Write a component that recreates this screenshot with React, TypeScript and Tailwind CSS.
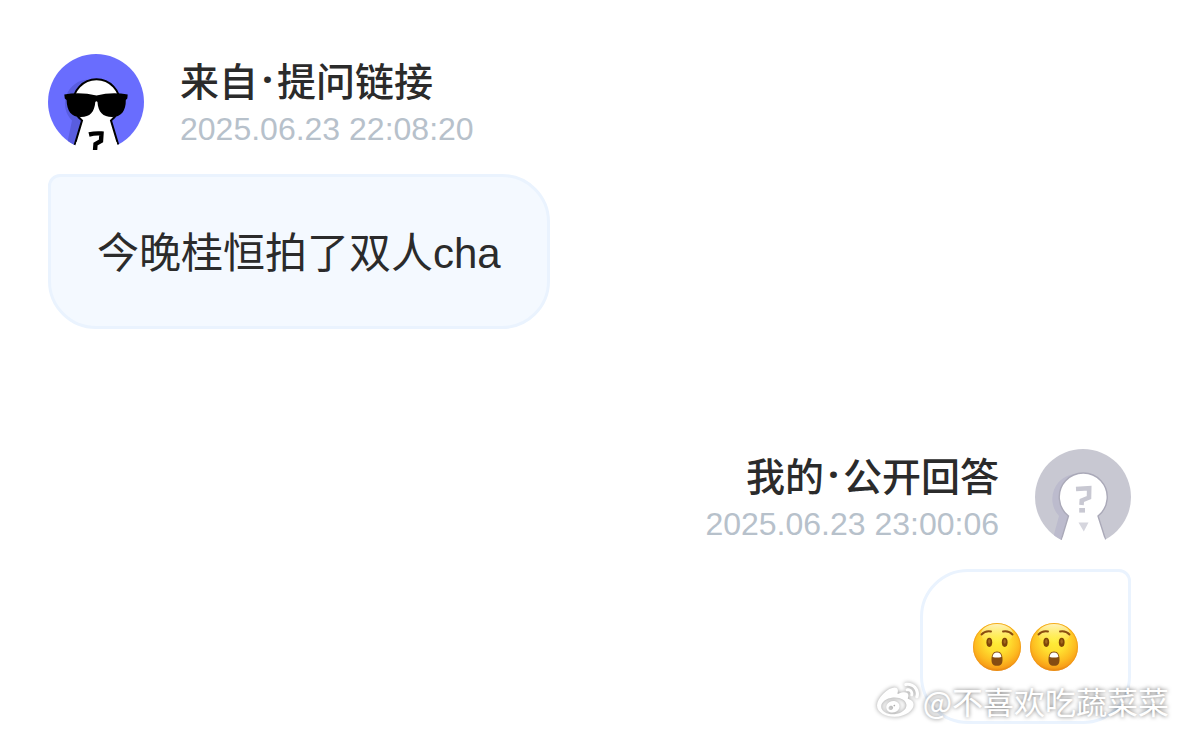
import type { ReactNode } from "react";
import { FaWeibo } from "react-icons/fa";

function AskerAvatar() {
  return (
    <svg viewBox="0 0 96 96" className="size-24 shrink-0" role="img" aria-label="提问者">
      <defs>
        <clipPath id="asker-clip">
          <circle cx="48" cy="48" r="48" />
        </clipPath>
      </defs>
      <circle cx="48" cy="48" r="48" fill="#696dfe" />
      <g clipPath="url(#asker-clip)">
        <path d="M40 25.500a24 24 0 0 0-16 41L17 100h9L34 67z" fill="#595ddf" />
        <path
          d="M34 66.500A23.200 23.200 0 1 1 63 66.500L73 100H24z"
          fill="#fff"
          stroke="#000"
          strokeWidth="2"
        />
      </g>
      <path d="M28.500 88L25.500 97H71.500L68.500 88z" fill="#fff" />
      <path
        d="M16.300 40.500Q32 37.500 48.500 41.500Q64 37.500 79.700 40.500L79.300 44.500L77.800 46C78 57 73 63 64 63C55 63 50 58 49.500 48Q48.500 46.500 47.300 48C46.500 58 42 63 33 63C23 63 19 57 18.600 46L16.800 44.500z"
        fill="#000"
      />
      <path d="M41 80.500Q47 79 53.500 79.500L53 87L47.500 90L47 97" fill="none" stroke="#000" strokeWidth="4.400" />
    </svg>
  );
}

function AnswererAvatar() {
  return (
    <svg viewBox="0 0 96 96" className="size-24 shrink-0" role="img" aria-label="回答者">
      <defs>
        <clipPath id="answerer-clip">
          <circle cx="48" cy="48" r="48" />
        </clipPath>
      </defs>
      <circle cx="48" cy="48" r="48" fill="#c8c8d2" />
      <g clipPath="url(#answerer-clip)">
        <path d="M41 25a25 25 0 0 0-17 42L15 100h10L33 67z" fill="#bcbbcd" />
        <path
          d="M33.500 67A24 24 0 1 1 63 67L73.500 100H23.500z"
          fill="#fff"
          stroke="#aaa9b8"
          strokeWidth="1.400"
        />
      </g>
      <path d="M28 88L25 97H72L69 88z" fill="#fff" />
      <path
        d="M41 40L54.200 39.200L54 48.500L46.800 51.500L46.500 56"
        fill="none"
        stroke="#c8c8d2"
        strokeWidth="4.600"
      />
      <path d="M44.200 59h5.800v4.600h-5.800z" fill="#c8c8d2" />
      <path d="M43.500 73.500h10L48.800 82.500z" fill="#d6d6de" />
    </svg>
  );
}

function AstonishedFace({ id }: { id: string }) {
  return (
    <svg viewBox="0 0 48 48" className="size-12" role="img" aria-label="😲">
      <defs>
        <radialGradient id={id} cx="0.5" cy="0.36" r="0.64">
          <stop offset="0" stopColor="#ffee38" />
          <stop offset="0.4" stopColor="#ffdf30" />
          <stop offset="0.72" stopColor="#fdbb20" />
          <stop offset="0.9" stopColor="#f8a018" />
          <stop offset="1" stopColor="#e37f10" />
        </radialGradient>
        <linearGradient id={`${id}-shine`} x1="0" y1="0" x2="0" y2="1">
          <stop offset="0" stopColor="#fffbe0" stopOpacity="0.8" />
          <stop offset="1" stopColor="#fff68a" stopOpacity="0" />
        </linearGradient>
      </defs>
      <circle cx="24" cy="24" r="24" fill={`url(#${id})`} />
      <circle cx="24" cy="24" r="23.500" fill="none" stroke="#ec9418" strokeOpacity="0.6" />
      <ellipse cx="24" cy="11" rx="16" ry="10" fill={`url(#${id}-shine)`} />
      <path
        d="M8.500 11.500Q12 7.500 18 8.500M30 8.500Q36 7.500 39.500 11.500"
        fill="none"
        stroke="#8a4d10"
        strokeWidth="1.900"
        strokeLinecap="round"
      />
      <ellipse cx="16.300" cy="19.300" rx="2.900" ry="4.600" fill="#7e4508" />
      <ellipse cx="31.700" cy="19.300" rx="2.900" ry="4.600" fill="#7e4508" />
      <ellipse cx="16.300" cy="18.500" rx="1.200" ry="2.200" fill="#a3681f" />
      <ellipse cx="31.700" cy="18.500" rx="1.200" ry="2.200" fill="#a3681f" />
      <path
        d="M24 28.500C28 28.500 29.500 32 29.500 36.500C29.500 41 28 42.800 24 42.800S18.500 41 18.500 36.500C18.500 32 20 28.500 24 28.500z"
        fill="#854c12"
      />
      <path d="M24 29.600C27 29.600 28.300 31.500 28.400 34Q24 35 19.600 34C19.700 31.500 21 29.600 24 29.600z" fill="#fff" />
    </svg>
  );
}

type HeadingProps = {
  from: string;
  kind: string;
  time: string;
  alignEnd?: boolean;
};

function Heading({ from, kind, time, alignEnd }: HeadingProps) {
  return (
    <div className={`flex flex-col gap-1 ${alignEnd ? "items-end" : "items-start"}`}>
      <h2 className="flex text-[39px] leading-[50px] font-medium text-[#2b2b2b]">
        {from}
        <span className="w-[19px] text-center font-['Noto_Sans'] font-bold">·</span>
        {kind}
      </h2>
      <time className="font-['Liberation_Sans',sans-serif] text-[32px] leading-[42px] text-[#b7c1cb]">{time}</time>
    </div>
  );
}

function Bubble({ className, children }: { className: string; children: ReactNode }) {
  return (
    <div
      className={`mt-6 flex h-[155px] w-fit items-center border-3 border-[#eaf3fe] px-[46px] text-[42px] text-[#2b2b2b] ${className}`}
    >
      {children}
    </div>
  );
}

export default function App() {
  return (
    <main className="relative bg-white px-12 pt-[54px] pb-[7px] font-['Noto_Sans_CJK_SC',sans-serif]">
      <section>
        <header className="flex items-center gap-9">
          <AskerAvatar />
          <Heading from="来自" kind="提问链接" time="2025.06.23 22:08:20" />
        </header>
        <Bubble className="rounded-[48px] rounded-tl-xl bg-[#f4f9ff]">
          <p className="pt-1 font-['Liberation_Sans','Noto_Sans_CJK_SC',sans-serif]">今晚桂恒拍了双人cha</p>
        </Bubble>
      </section>

      <section className="mt-[120px] flex flex-col items-end">
        <header className="flex items-center gap-9">
          <Heading from="我的" kind="公开回答" time="2025.06.23 23:00:06" alignEnd />
          <AnswererAvatar />
        </header>
        <Bubble className="rounded-[48px] rounded-tr-xl bg-white">
          <div className="flex gap-[9px] px-1">
            <AstonishedFace id="face-a" />
            <AstonishedFace id="face-b" />
          </div>
        </Bubble>
      </section>

      <div className="absolute right-[10px] bottom-2 flex items-center gap-1 text-white">
        <FaWeibo className="size-[42px] drop-shadow-[0_0_2px_rgba(0,0,0,0.4)]" aria-hidden="true" />
        <span className="text-[31px] leading-[44px] [text-shadow:0_0_4px_rgba(0,0,0,0.55)]">@不喜欢吃蔬菜菜</span>
      </div>
    </main>
  );
}
